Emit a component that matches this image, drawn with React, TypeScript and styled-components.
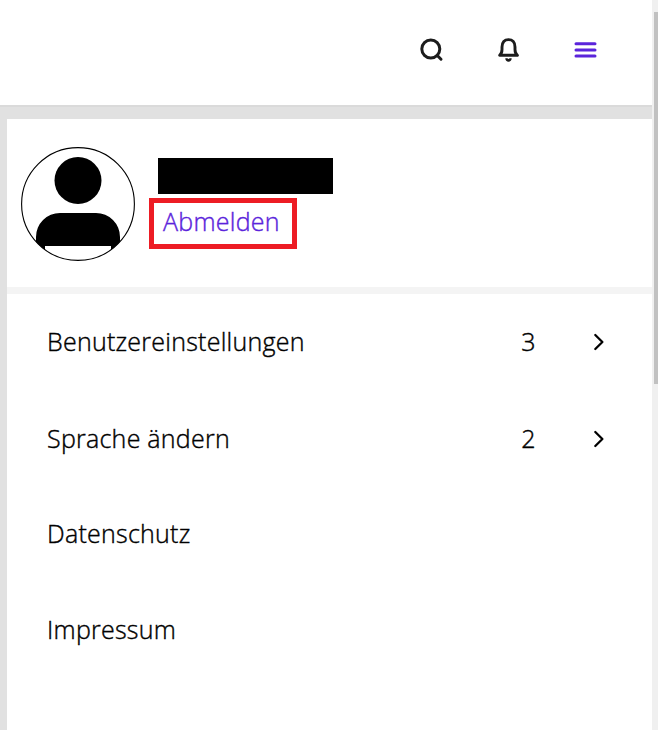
import React from 'react';
import styled, { createGlobalStyle } from 'styled-components';

const GlobalStyle = createGlobalStyle`
  *, *::before, *::after { box-sizing: border-box; }
  body { margin: 0; overflow: hidden; background: #fff; font-family: 'Open Sans', 'Noto Sans', sans-serif; }
`;

const Window = styled.div`
  display: flex;
  width: 658px;
  height: 730px;
  overflow: hidden;
`;

const Page = styled.div`
  display: flex;
  flex-direction: column;
  width: 652px;
`;

const Header = styled.header`
  display: flex;
  justify-content: flex-end;
  align-items: flex-start;
  gap: 45px;
  flex: none;
  height: 107px;
  padding: 34px 50px 0 0;
  background: #fff;
  border-bottom: 2px solid #dadada;
`;

const IconButton = styled.button<{ $accent?: boolean }>`
  width: 32px;
  height: 32px;
  padding: 0;
  border: 0;
  background: none;
  color: ${({ $accent }) => ($accent ? '#5b24db' : '#1c1c1c')};
  svg { display: block; }
`;

const Backdrop = styled.main`
  display: flex;
  flex: 1;
  padding: 12px 0 0 7px;
  background: #e1e1e1;
`;

const Panel = styled.section`
  flex: 1;
  background: #fff;
`;

const Profile = styled.div`
  display: flex;
  height: 175px;
  padding: 28px 0 0 14px;
  border-bottom: 7px solid #f4f4f4;
`;

const Avatar = styled.svg`
  display: block;
  flex: none;
  width: 114px;
  height: 114px;
`;

const Account = styled.div`
  display: flex;
  flex-direction: column;
  align-items: flex-start;
  gap: 4px;
  padding: 11px 0 0 14px;
`;

const RedactedName = styled.div`
  width: 175px;
  height: 36px;
  margin-left: 9px;
  background: #000;
`;

const LogoutLink = styled.a`
  width: 148px;
  height: 51px;
  padding-left: 9px;
  border: 5px solid #ed1c24;
  color: #5b24db;
  font-size: 25px;
  font-weight: 300;
  letter-spacing: 0.27px;
  -webkit-text-stroke: 0.4px currentColor;
  line-height: 37px;
  white-space: nowrap;
`;

const Menu = styled.ul`
  margin: 0;
  padding: 0;
  list-style: none;
`;

const MenuItem = styled.li<{ $height: number }>`
  display: flex;
  align-items: center;
  height: ${({ $height }) => $height}px;
  padding: 0 45px 0 40px;
  color: #000;
  font-size: 25px;
  font-weight: 300;
  letter-spacing: 0.25px;
  -webkit-text-stroke: 0.4px currentColor;
  line-height: 34px;
  & > span { margin-top: -2px; }
`;

const Label = styled.span`
  flex: 1;
`;

const Count = styled.span`
  width: 15px;
  margin-right: 55px;
  text-align: center;
`;

const ScrollTrack = styled.div`
  width: 6px;
  padding: 12px 0 0 2px;
  background: #f0f0f0;
`;

const ScrollThumb = styled.div`
  height: 372px;
  background: #c1c1c1;
`;

const entries: { label: string; height: number; count?: number }[] = [
  { label: 'Benutzereinstellungen', height: 96, count: 3 },
  { label: 'Sprache ändern', height: 97, count: 2 },
  { label: 'Datenschutz', height: 94 },
  { label: 'Impressum', height: 98 },
];

const SearchIcon = () => (
  <svg width="32" height="32" fill="none" stroke="currentColor" strokeWidth="3" strokeLinecap="round">
    <circle cx="14.8" cy="15" r="9" />
    <path d="M21.3 21.5L25 25.2" />
  </svg>
);

const BellIcon = () => (
  <svg width="32" height="32" fill="none" stroke="currentColor" strokeWidth="2.9" strokeLinejoin="round">
    <path d="M6.6 21.3C8.6 19.7 9 17.8 9 15.5V13C9 8.4 11.5 5.6 15.5 5.6S22 8.4 22 13V15.5C22 17.8 22.4 19.7 24.4 21.3Z" />
    <path d="M12.3 24.2H14.3L15.5 25L16.7 24.2H18.7C18.7 26.4 17.3 27.8 15.5 27.8S12.3 26.4 12.3 24.2Z" fill="currentColor" stroke="none" />
  </svg>
);

const MenuIcon = () => (
  <svg width="32" height="32" fill="none" stroke="currentColor" strokeWidth="3" strokeLinecap="round">
    <path d="M6 9.7H25M6 16H25M6 22.1H25" />
  </svg>
);

const ChevronIcon = () => (
  <svg width="16" height="20" fill="none" stroke="#000" strokeWidth="2.3" strokeLinecap="round" strokeLinejoin="round">
    <path d="M4.3 3L11.4 10L4.3 17" />
  </svg>
);

export default function App() {
  return (
    <>
      <GlobalStyle />
      <Window>
        <Page>
          <Header>
            <IconButton><SearchIcon /></IconButton>
            <IconButton><BellIcon /></IconButton>
            <IconButton $accent><MenuIcon /></IconButton>
          </Header>
          <Backdrop>
            <Panel>
              <Profile>
                <Avatar viewBox="0 0 114 114">
                  <defs>
                    <clipPath id="avatar"><circle cx="57" cy="57" r="56.5" /></clipPath>
                  </defs>
                  <g clipPath="url(#avatar)">
                    <circle cx="57" cy="33.5" r="23.5" />
                    <path d="M15 114V90A24 24 0 0 1 39 66H75A24 24 0 0 1 99 90V114H90V99H24V114Z" />
                  </g>
                  <circle cx="57" cy="57" r="56.4" fill="none" stroke="#000" strokeWidth="1.1" />
                </Avatar>
                <Account>
                  <RedactedName />
                  <LogoutLink>Abmelden</LogoutLink>
                </Account>
              </Profile>
              <Menu>
                {entries.map(({ label, height, count }) => (
                  <MenuItem key={label} $height={height}>
                    <Label>{label}</Label>
                    {count !== undefined && (
                      <>
                        <Count>{count}</Count>
                        <ChevronIcon />
                      </>
                    )}
                  </MenuItem>
                ))}
              </Menu>
            </Panel>
          </Backdrop>
        </Page>
        <ScrollTrack><ScrollThumb /></ScrollTrack>
      </Window>
    </>
  );
}
